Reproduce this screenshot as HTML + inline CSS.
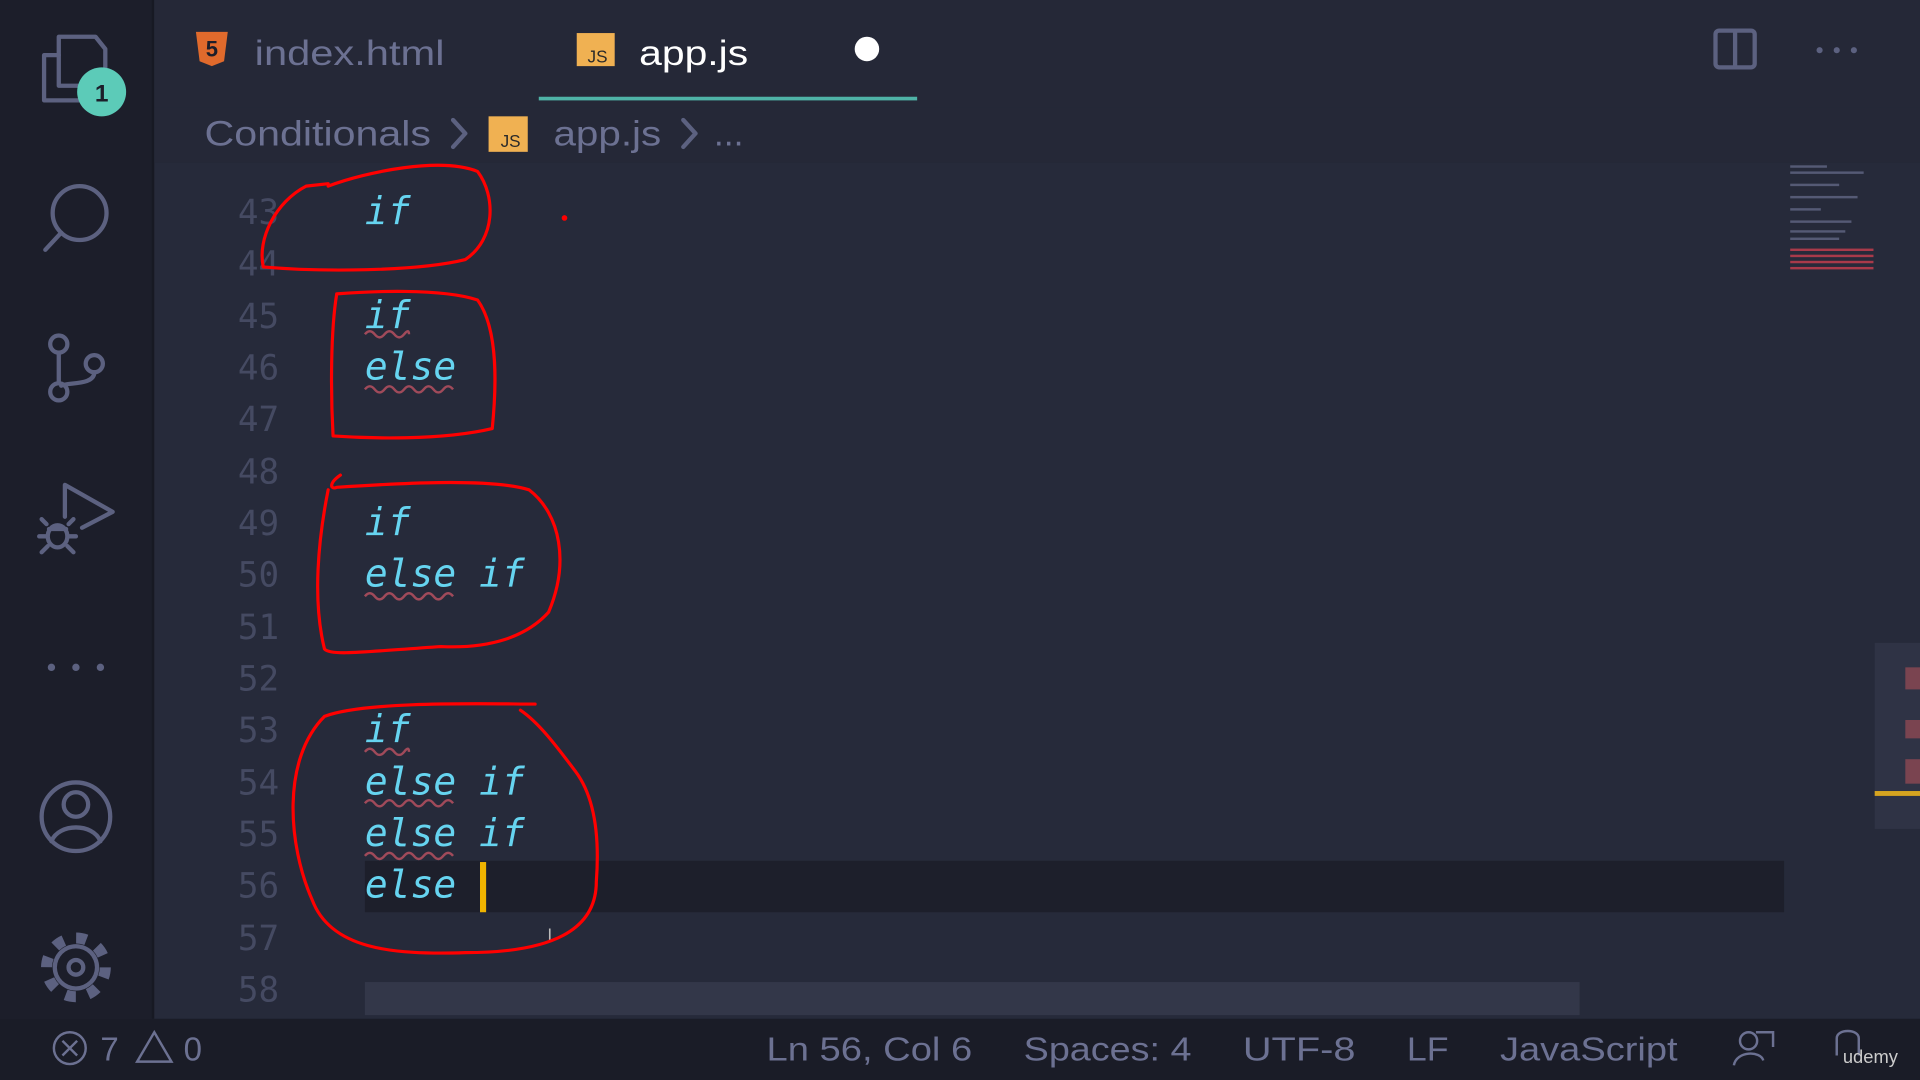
<!DOCTYPE html>
<html><head><meta charset="utf-8"><style>
html,body{margin:0;padding:0;background:#252837;overflow:hidden}
svg{display:block}
.ln{font-family:"DejaVu Sans Mono","Liberation Mono",monospace;font-size:28px;fill:#454a62;text-anchor:end}
.cd{font-family:"DejaVu Sans Mono","Liberation Mono",monospace;font-size:31px;font-style:italic;fill:#66d4f0}
.ui{font-family:"Liberation Sans",sans-serif}
.sq{fill:none;stroke:#a04a5a;stroke-width:2}
.rc{fill:none;stroke:#ff0000;stroke-width:2.6;stroke-linecap:round;stroke-linejoin:round}
.ic{fill:none;stroke:#5c6180;stroke-width:3.5;stroke-linecap:round;stroke-linejoin:round}
</style></head><body>
<svg width="1920" height="1080" viewBox="0 0 1568 882" xmlns="http://www.w3.org/2000/svg">
<rect width="1568" height="882" fill="#262a3a"/>
<rect x="0" y="0" width="125" height="832" fill="#1c1e2a"/>
<rect x="124" y="0" width="2" height="832" fill="#171923"/>
<rect x="126" y="0" width="1442" height="88" fill="#252837"/>
<rect x="126" y="88" width="1442" height="45" fill="#252837"/>
<rect x="440" y="79" width="309" height="3" fill="#4fb3a7"/>
<rect x="298" y="703" width="1159" height="42" fill="#1d1f2b"/>
<rect x="298" y="802" width="992" height="27" fill="#333749"/>
<g fill="#555a75">
<rect x="1462" y="135" width="30" height="2"/><rect x="1462" y="140" width="60" height="2"/><rect x="1462" y="150" width="40" height="2"/>
<rect x="1462" y="160" width="55" height="2"/><rect x="1462" y="170" width="25" height="2"/><rect x="1462" y="180" width="50" height="2"/>
<rect x="1462" y="188" width="45" height="2"/><rect x="1462" y="194" width="40" height="2"/>
</g>
<g fill="#a83a4a"><rect x="1462" y="203" width="68" height="2"/><rect x="1462" y="208" width="68" height="2"/><rect x="1462" y="213" width="68" height="2"/><rect x="1462" y="218" width="68" height="2"/></g>
<rect x="1531" y="525" width="37" height="152" fill="#2f3345"/>
<rect x="1556" y="545" width="12" height="18" fill="#7a4450"/>
<rect x="1556" y="588" width="12" height="15" fill="#7a4450"/>
<rect x="1556" y="620" width="12" height="20" fill="#7a4450"/>
<rect x="1531" y="646" width="37" height="4" fill="#d6a420"/>
<rect x="0" y="832" width="1568" height="50" fill="#1a1c27"/>
<!-- tabs -->
<path d="M160 26 L186 26 L183 50 L173 54 L163 50 Z" fill="#e06a2c"/>
<text x="173" y="46" class="ui" font-size="18" font-weight="bold" fill="#1c1e2a" text-anchor="middle">5</text>
<text x="208" y="53" class="ui" font-size="29" fill="#6c7192" textLength="155" lengthAdjust="spacingAndGlyphs">index.html</text>
<rect x="471" y="27" width="31" height="27" fill="#f0b152"/>
<text x="488" y="51" class="ui" font-size="14" fill="#2a2a2a" text-anchor="middle">JS</text>
<text x="522" y="53" class="ui" font-size="29" fill="#ffffff" textLength="89" lengthAdjust="spacingAndGlyphs">app.js</text>
<circle cx="708" cy="40" r="10" fill="#ffffff"/>
<rect x="1401" y="25" width="32" height="30" rx="3" class="ic"/><line x1="1417" y1="25" x2="1417" y2="55" class="ic"/>
<g fill="#5c6180"><circle cx="1486" cy="41" r="2.5"/><circle cx="1500" cy="41" r="2.5"/><circle cx="1514" cy="41" r="2.5"/></g>
<!-- breadcrumbs -->
<text x="167" y="119" class="ui" font-size="29" fill="#6c7192" textLength="185" lengthAdjust="spacingAndGlyphs">Conditionals</text>
<path d="M370 98 L380 109 L370 120" class="ic" stroke-width="2.5"/>
<rect x="399" y="95" width="32" height="29" fill="#f0b152"/>
<text x="417" y="120" class="ui" font-size="14" fill="#2a2a2a" text-anchor="middle">JS</text>
<text x="452" y="119" class="ui" font-size="29" fill="#6c7192" textLength="88" lengthAdjust="spacingAndGlyphs">app.js</text>
<path d="M558 98 L568 109 L558 120" class="ic" stroke-width="2.5"/>
<text x="583" y="119" class="ui" font-size="29" fill="#6c7192">...</text>
<g class="ln">
<text x="228" y="183">43</text><text x="228" y="225">44</text><text x="228" y="268">45</text><text x="228" y="310">46</text>
<text x="228" y="352">47</text><text x="228" y="395">48</text><text x="228" y="437">49</text><text x="228" y="479">50</text>
<text x="228" y="522">51</text><text x="228" y="564">52</text><text x="228" y="606">53</text><text x="228" y="649">54</text>
<text x="228" y="691">55</text><text x="228" y="733">56</text><text x="228" y="776">57</text><text x="228" y="818">58</text>
</g>
<g class="cd">
<text x="298" y="183">if</text>
<text x="298" y="268">if</text><text x="298" y="310">else</text>
<text x="298" y="437">if</text><text x="298" y="479">else if</text>
<text x="298" y="606">if</text><text x="298" y="649">else if</text><text x="298" y="691">else if</text><text x="298" y="733">else</text>
</g>
<rect x="392" y="704" width="5" height="41" fill="#f0b400"/>
<g class="sq">
<path d="M298 273 q4 -5 8 0 t8 0 t8 0 t8 0 t4 0"/>
<path d="M298 318 q4 -5 8 0 t8 0 t8 0 t8 0 t8 0 t8 0 t8 0 t8 0 t8 0"/>
<path d="M298 487 q4 -5 8 0 t8 0 t8 0 t8 0 t8 0 t8 0 t8 0 t8 0 t8 0"/>
<path d="M298 614 q4 -5 8 0 t8 0 t8 0 t8 0 t4 0"/>
<path d="M298 656 q4 -5 8 0 t8 0 t8 0 t8 0 t8 0 t8 0 t8 0 t8 0 t8 0"/>
<path d="M298 699 q4 -5 8 0 t8 0 t8 0 t8 0 t8 0 t8 0 t8 0 t8 0 t8 0"/>
</g>
<text x="449" y="768" class="ui" font-size="14" fill="#bbbbbb" text-anchor="middle">I</text>
<g class="rc">
<path d="M268 152 C300 140 360 128 390 140 C405 160 405 195 380 212 C340 222 260 222 215 218 C210 195 225 165 250 152 L268 150"/>
<path d="M275 240 C300 238 360 235 390 245 C408 270 405 320 402 350 C360 360 300 358 272 356 C270 320 270 270 275 240"/>
<path d="M278 388 C268 395 270 400 275 398 C320 395 400 390 432 400 C458 420 465 460 448 500 C430 520 400 530 360 528 C300 532 270 536 265 530 C255 490 260 440 268 400"/>
<path d="M437 575 C400 575 300 572 265 585 C230 620 235 690 255 735 C270 775 320 780 380 778 C450 778 487 760 487 720 C490 680 485 650 470 630 C455 610 440 590 425 580"/>
<circle cx="461" cy="178" r="1" fill="#ff0000"/>
</g>
<!-- activity icons -->
<g class="ic">
<path d="M48 30 L78 30 L86 40 L86 70 L48 70 Z"/>
<path d="M36 45 L48 45 M36 45 L36 82 L66 82 L66 70"/>
<circle cx="65" cy="174" r="22"/><path d="M50 190 L37 204"/>
<circle cx="48" cy="281" r="7"/><circle cx="48" cy="320" r="7"/><circle cx="77" cy="297" r="7"/>
<path d="M48 288 L48 313 M77 304 C77 315 55 312 50 315"/>
<path d="M53 422 L53 396 L92 418 L67 431"/>
<ellipse cx="47" cy="438" rx="8" ry="9"/><path d="M40 432 L54 432 M34 424 L38 428 M60 424 L56 428 M32 438 L38 438 M56 438 L62 438 M34 451 L39 446 M60 451 L55 446"/>
<circle cx="62" cy="667" r="28"/><circle cx="62" cy="657" r="10"/><path d="M42 687 C48 672 76 672 82 687"/>
</g>
<g fill="#5c6180"><circle cx="42" cy="545" r="3"/><circle cx="62" cy="545" r="3"/><circle cx="82" cy="545" r="3"/></g>
<!-- gear -->
<g transform="translate(62 790)">
<circle r="24" fill="none" stroke="#5c6180" stroke-width="9" stroke-dasharray="8.5 10.35"/>
<circle r="19" fill="#5c6180"/>
<circle r="15.5" fill="#1c1e2a"/>
<circle r="6" fill="none" stroke="#5c6180" stroke-width="3.5"/>
</g>
<circle cx="83" cy="75" r="20" fill="#5ccbb8"/>
<text x="83" y="83" class="ui" font-size="20" font-weight="bold" fill="#1c1e2a" text-anchor="middle">1</text>
<!-- status bar -->
<circle cx="57" cy="856" r="13" fill="none" stroke="#6c7192" stroke-width="2"/>
<path d="M51 850 L63 862 M63 850 L51 862" stroke="#6c7192" stroke-width="2"/>
<text x="82" y="866" class="ui" font-size="27" fill="#6c7192">7</text>
<path d="M126 843 L140 867 L112 867 Z" fill="none" stroke="#6c7192" stroke-width="2"/>
<text x="150" y="866" class="ui" font-size="27" fill="#6c7192">0</text>
<g class="ui" font-size="27" fill="#6c7192">
<text x="626" y="866" textLength="168" lengthAdjust="spacingAndGlyphs">Ln 56, Col 6</text>
<text x="836" y="866" textLength="137" lengthAdjust="spacingAndGlyphs">Spaces: 4</text>
<text x="1015" y="866" textLength="92" lengthAdjust="spacingAndGlyphs">UTF-8</text>
<text x="1149" y="866" textLength="34" lengthAdjust="spacingAndGlyphs">LF</text>
<text x="1225" y="866" textLength="145" lengthAdjust="spacingAndGlyphs">JavaScript</text>
</g>
<circle cx="1428" cy="850" r="7" fill="none" stroke="#6c7192" stroke-width="2"/>
<path d="M1416 870 C1418 858 1438 858 1440 866 M1434 843 L1448 843 L1448 855" fill="none" stroke="#6c7192" stroke-width="2"/>
<path d="M1500 862 L1500 848 C1500 840 1518 840 1518 848 L1518 862" fill="none" stroke="#6c7192" stroke-width="2"/>
<text x="1505" y="868" class="ui" font-size="15" fill="#cccccc">udemy</text>
</svg>
</body></html>
